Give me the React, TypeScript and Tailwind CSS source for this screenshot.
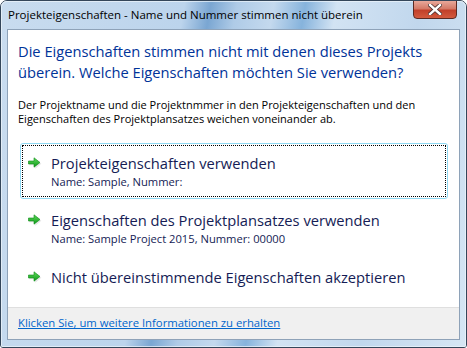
import React from "react";

function Arrow() {
  return (
    <svg width="16" height="14" viewBox="0 0 16 14" className="shrink-0">
      <defs>
        <linearGradient id="ag" x1="0" y1="0" x2="0" y2="1">
          <stop offset="0" stopColor="#5fd85a" />
          <stop offset="1" stopColor="#0e9a1a" />
        </linearGradient>
      </defs>
      <path d="M1.5 5.5 H7.5 V2 L13.5 7 L7.5 12 V8.5 H1.5 Z" fill="#cfcfcf" opacity="0.55" transform="translate(0.8,0.8)" />
      <path d="M1.5 5 H7 V1.8 L13 6.5 L7 11.2 V8 H1.5 Z" fill="url(#ag)" stroke="#0b8a16" strokeWidth="0.6" />
    </svg>
  );
}

function CommandLink({ title, sub, focused }: { title: string; sub?: string; focused?: boolean }) {
  return (
    <div
      className={
        "rounded-[3px] border p-[1px] " +
        (sub ? "h-[56px] " : "h-[40px] ") +
        (focused ? "border-[#8fd8f2]" : "border-transparent")
      }
    >
      <div
        className={
          "h-full flex items-start pl-[4px] pt-[7px] border " +
          (focused ? "border-dotted border-black" : "border-transparent")
        }
      >
        <div className="w-[24px] pt-[3px]">
          <Arrow />
        </div>
        <div className="flex flex-col">
          <div className="text-[14.7px] leading-[21px] text-[#151c55] whitespace-nowrap">{title}</div>
          {sub && <div className="text-[11.2px] leading-[16px] text-[#151c55] whitespace-nowrap">{sub}</div>}
        </div>
      </div>
    </div>
  );
}

export default function App() {
  return (
    <div
      className="w-[467px] h-[348px] flex flex-col rounded-t-[7px] rounded-b-[3px] border border-[#34465a] relative overflow-hidden"
      style={{ fontFamily: '"Open Sans", "Noto Sans", sans-serif' }}
    >
      <div className="absolute inset-0 bg-[linear-gradient(100deg,#c9dcef_0%,#bcd4ec_35%,#7aa6d2_40%,#afcbe7_45%,#c4d9ee_52%,#86b3dc_58%,#d2e3f3_64%,#c1d7ed_80%,#d6e6f4_100%)]" />
      <div className="absolute inset-0 rounded-t-[6px] border border-[#eef5fb]/70" />
      <div className="relative flex flex-col flex-1 px-[6px] pb-[7px]">
        <div className="h-[28px] flex items-center pl-[1px] text-[11.5px] text-black whitespace-nowrap">
          Projekteigenschaften - Name und Nummer stimmen nicht überein
        </div>
        <div className="absolute top-[-1px] right-[9px] w-[44px] h-[19px] rounded-b-[4px] border border-[#5b2a23] bg-[linear-gradient(180deg,#e8a89a_0%,#d47a68_45%,#c2402a_55%,#d35a3e_100%)] flex items-center justify-center">
          <svg width="14" height="11" viewBox="0 0 14 11">
            <path d="M2 1 L12 10 M12 1 L2 10" stroke="#4a3030" strokeWidth="4" strokeLinecap="square" />
            <path d="M2 1 L12 10 M12 1 L2 10" stroke="#ffffff" strokeWidth="2.4" strokeLinecap="square" />
          </svg>
        </div>
        <div className="flex-1 flex flex-col border border-[#8ea2b8] bg-white">
          <div className="flex-1 flex flex-col pl-[10px] pr-[10px]">
            <div className="pt-[11px] text-[14.7px] leading-[21px] text-[#003399] whitespace-nowrap">
              Die Eigenschaften stimmen nicht mit denen dieses Projekts
              <br />
              überein. Welche Eigenschaften möchten Sie verwenden?
            </div>
            <div className="pt-[15px] text-[11px] leading-[14px] text-black whitespace-nowrap">
              Der Projektname und die Projektnmmer in den Projekteigenschaften und den
              <br />
              Eigenschaften des Projektplansatzes weichen voneinander ab.
            </div>
            <div className="mt-[17px] ml-[2px] mr-[1px] flex flex-col gap-[1px]">
              <CommandLink focused title="Projekteigenschaften verwenden" sub="Name: Sample, Nummer:" />
              <CommandLink title="Eigenschaften des Projektplansatzes verwenden" sub="Name: Sample Project 2015, Nummer: 00000" />
              <CommandLink title="Nicht übereinstimmende Eigenschaften akzeptieren" />
            </div>
          </div>
          <div className="h-[32px] shrink-0 bg-[#f0f0f0] border-t border-[#dfdfdf] flex items-center pl-[10px]">
            <span className="text-[11.3px] text-[#0066cc] underline whitespace-nowrap">Klicken Sie, um weitere Informationen zu erhalten</span>
          </div>
        </div>
      </div>
    </div>
  );
}
